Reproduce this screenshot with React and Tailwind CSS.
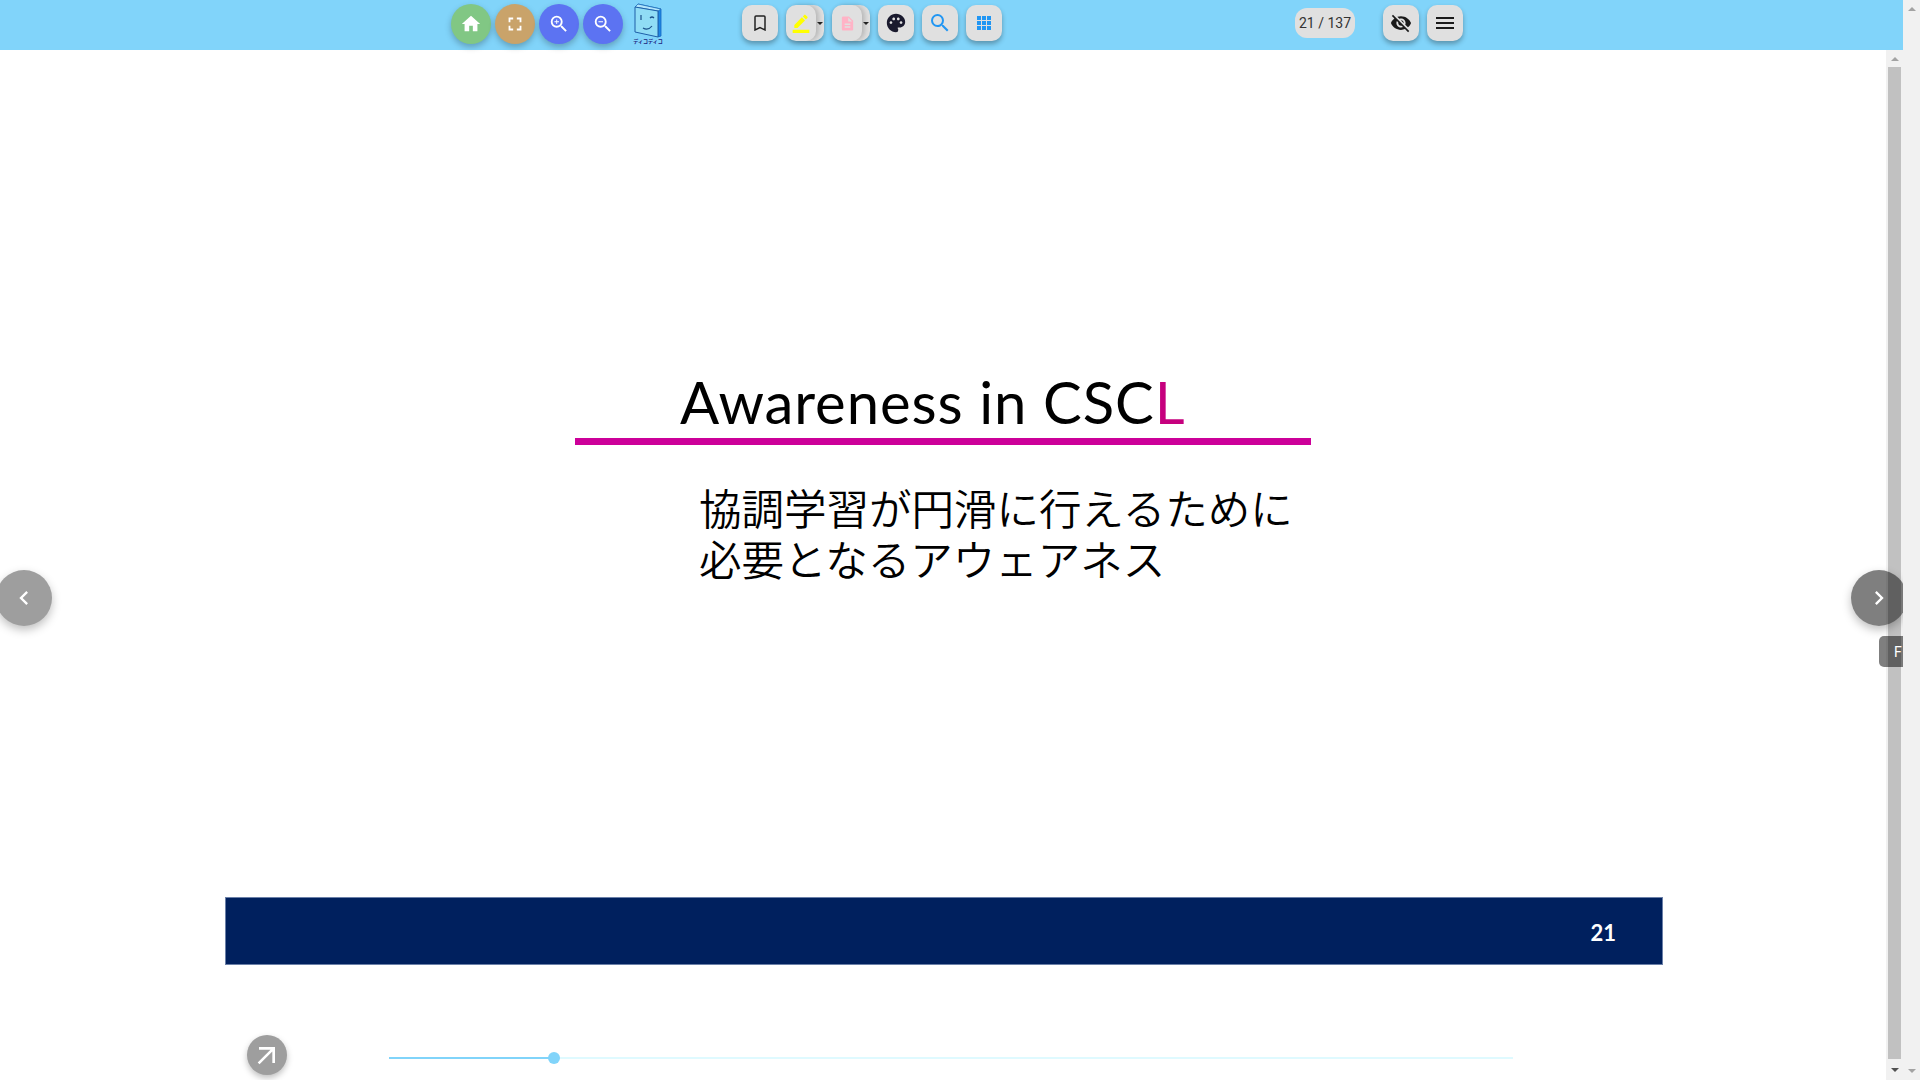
import React from 'react';
import {
  MdHome, MdFullscreen, MdZoomIn, MdZoomOut, MdBorderColor, MdDescription,
  MdPalette, MdSearch, MdVisibilityOff, MdMenu, MdChevronLeft, MdChevronRight, MdArrowOutward,
} from 'react-icons/md';

const circleClass = 'w-10 h-10 rounded-full flex items-center justify-center text-white shadow-[0_3px_6px_rgba(0,0,0,0.25)]';
const squareClass = 'w-9 h-9 rounded-[10px] bg-[#e0e0e0] flex items-center justify-center shadow-[0_3px_5px_rgba(0,0,0,0.3)]';

const SplitButton = ({ children }) => (
  <div className="w-[38px] h-9 rounded-[10px] bg-[#e0e0e0] flex shadow-[0_3px_5px_rgba(0,0,0,0.3)]">
    <div className="w-[30px] h-9 rounded-[10px] flex items-center justify-center shadow-[3px_0_5px_rgba(0,0,0,0.18)]">
      {children}
    </div>
    <div className="flex-1 flex items-center justify-center">
      <span className="w-0 h-0 border-x-[3px] border-x-transparent border-t-[3px] border-t-[#222]" />
    </div>
  </div>
);

const GridIcon = () => (
  <svg width="14" height="14" viewBox="0 0 14 14" fill="#2196f3">
    <rect x="0" y="0" width="4" height="4" />
    <rect x="5" y="0" width="4" height="4" />
    <rect x="10" y="0" width="4" height="4" />
    <rect x="0" y="5" width="4" height="4" />
    <rect x="5" y="5" width="4" height="4" />
    <rect x="10" y="5" width="4" height="4" />
    <rect x="0" y="10" width="4" height="4" />
    <rect x="5" y="10" width="4" height="4" />
    <rect x="10" y="10" width="4" height="4" />
  </svg>
);

const BookmarkIcon = () => (
  <svg width="12" height="16" viewBox="0 0 12 16" fill="none" stroke="#222" strokeWidth="1.5">
    <path d="M1 15 V2 Q1 1 2 1 H10 Q11 1 11 2 V15 L6 12.5 Z" />
  </svg>
);

const Logo = () => (
  <div className="ml-[9px] w-8 h-[42px] flex flex-col items-center">
    <svg width="30" height="35" viewBox="0 0 30 35">
      <path d="M5 1 L28 6 L28 33 L25 34 L25 7 L5 2 Z" fill="#1e88e5" stroke="#1565c0" strokeWidth="0.8" />
      <path d="M5 1 L28 6 L25 8 L2 4 Z" fill="#b3e5fc" stroke="#1e6fb8" strokeWidth="0.8" />
      <path d="M2 4 L25 8 L25 34 L2 29 Z" fill="#90dcf5" stroke="#1e5fa8" strokeWidth="1" />
      <path d="M8 12 v5 M17 15 q2 -2 4 0 M10 25 q5 3 9 -2" fill="none" stroke="#1a4f8a" strokeWidth="1.2" />
    </svg>
    <span className="text-[5px] leading-[6px] font-bold text-[#1a237e] whitespace-nowrap font-['Noto_Sans_CJK_JP',sans-serif]">ディコディコ</span>
  </div>
);

const Arrow = ({ up, dark }) => (
  <span
    className={`w-0 h-0 border-x-[4px] border-x-transparent ${up ? 'border-b-[4px]' : 'border-t-[4px]'} ${
      up ? 'border-b-[#a3a3a3]' : dark ? 'border-t-[#505050]' : 'border-t-[#a3a3a3]'
    }`}
  />
);

const Header = () => (
  <header className="h-[50px] shrink-0 bg-[#81d4fa] flex items-center pl-[451px] pb-[2px]">
    <div className="flex gap-1">
      <button className={`${circleClass} bg-[#81c784]`}><MdHome size={22} /></button>
      <button className={`${circleClass} bg-[#c9a36a]`}><MdFullscreen size={22} /></button>
      <button className={`${circleClass} bg-[#5c73f2]`}><MdZoomIn size={22} /></button>
      <button className={`${circleClass} bg-[#5c73f2]`}><MdZoomOut size={22} /></button>
    </div>
    <Logo />
    <div className="ml-[78px] mb-[2px] flex gap-2">
      <button className={squareClass}><BookmarkIcon /></button>
      <SplitButton><MdBorderColor size={20} className="text-[#ffff00]" /></SplitButton>
      <SplitButton><MdDescription size={17} className="text-[#ffb3c6]" /></SplitButton>
      <button className={squareClass}><MdPalette size={22} className="text-[#1a1a2e]" /></button>
      <button className={squareClass}><MdSearch size={24} className="text-[#2196f3]" /></button>
      <button className={squareClass}><GridIcon /></button>
    </div>
    <div className="ml-[293px] mb-[2px] w-[60px] h-[30px] rounded-xl bg-[#e0e0e0] flex items-center justify-center text-sm text-[#333] font-['Roboto',sans-serif]">
      21 / 137
    </div>
    <div className="ml-7 mb-[2px] flex gap-2">
      <button className={squareClass}><MdVisibilityOff size={22} className="text-[#1a1a1a]" /></button>
      <button className={squareClass}><MdMenu size={24} className="text-[#1a1a1a]" /></button>
    </div>
  </header>
);

const Slide = () => (
  <section className="ml-[225px] mt-[106px] w-[1438px] h-[809px] shrink-0 flex flex-col bg-white">
    <h1 className="pl-[455px] pt-[213px] h-[282px] text-[58px] leading-[66px] tracking-[0.9px] text-black font-normal font-['Lato',sans-serif] whitespace-nowrap">
      Awareness in CSC<span className="text-[#c6007e]">L</span>
    </h1>
    <div className="ml-[350px] w-[736px] h-[7px] bg-[#cc0099]" />
    <p className="ml-[474px] mt-[36px] text-[42.5px] leading-[51px] font-[350] text-black font-['Noto_Sans_CJK_JP',sans-serif] whitespace-nowrap">
      協調学習が円滑に行えるために<br />必要となるアウェアネス
    </p>
    <div className="mt-auto h-[68px] bg-[#00205e] border border-[#6b80a8] flex items-center justify-end pr-[46px] pt-[2px]">
      <span className="text-[22px] font-bold text-white font-['Lato',sans-serif]">21</span>
    </div>
  </section>
);

const BottomBar = () => (
  <div className="mt-[70px] ml-[247px] flex items-center">
    <button className={`${circleClass} bg-[#9e9e9e]`}><MdArrowOutward size={32} /></button>
    <div className="ml-[102px] w-[1124px] h-[2px] bg-[#dffaff] relative mt-[6px]">
      <div className="w-[165px] h-[2px] bg-[#81d4fa]" />
      <span className="absolute left-[159px] -top-[5px] w-3 h-3 rounded-full bg-[#81d4fa]" />
    </div>
  </div>
);

export default function App() {
  return (
    <div className="w-full h-screen flex overflow-hidden bg-white">
      <div className="relative flex-1 min-w-0 flex flex-col overflow-hidden">
        <Header />
        <div className="flex-1 min-h-0 flex">
          <main className="flex-1 min-w-0 flex flex-col">
            <Slide />
            <BottomBar />
          </main>
          {/* inner scrollbar */}
          <div className="w-[17px] bg-[#f1f1f1] flex flex-col items-center">
            <div className="h-[17px] flex items-center justify-center"><Arrow up /></div>
            <div className="flex-1 w-[13px] bg-[#c1c1c1]" />
            <div className="h-[21px] flex items-center justify-center"><Arrow dark /></div>
          </div>
        </div>
        <button className="absolute left-[-4px] top-[570px] w-14 h-14 rounded-full bg-[#9e9e9e] flex items-center justify-center text-white shadow-[0_4px_10px_rgba(0,0,0,0.25)]">
          <MdChevronLeft size={28} />
        </button>
        <button className="absolute left-[1851px] top-[570px] w-14 h-14 rounded-full bg-black/50 flex items-center justify-center text-white shadow-[0_4px_10px_rgba(0,0,0,0.25)]">
          <MdChevronRight size={28} />
        </button>
        <div className="absolute left-[1879px] top-[636px] w-10 h-[31px] rounded-l-[5px] bg-black/50 text-white text-sm pl-[15px] flex items-center font-['Roboto',sans-serif]">
          F
        </div>
      </div>
      {/* outer scrollbar */}
      <div className="w-[17px] bg-[#f1f1f1] flex flex-col items-center justify-between">
        <div className="h-[17px] flex items-center justify-center"><Arrow up /></div>
        <div className="h-[18px] flex items-center justify-center"><Arrow /></div>
      </div>
    </div>
  );
}
